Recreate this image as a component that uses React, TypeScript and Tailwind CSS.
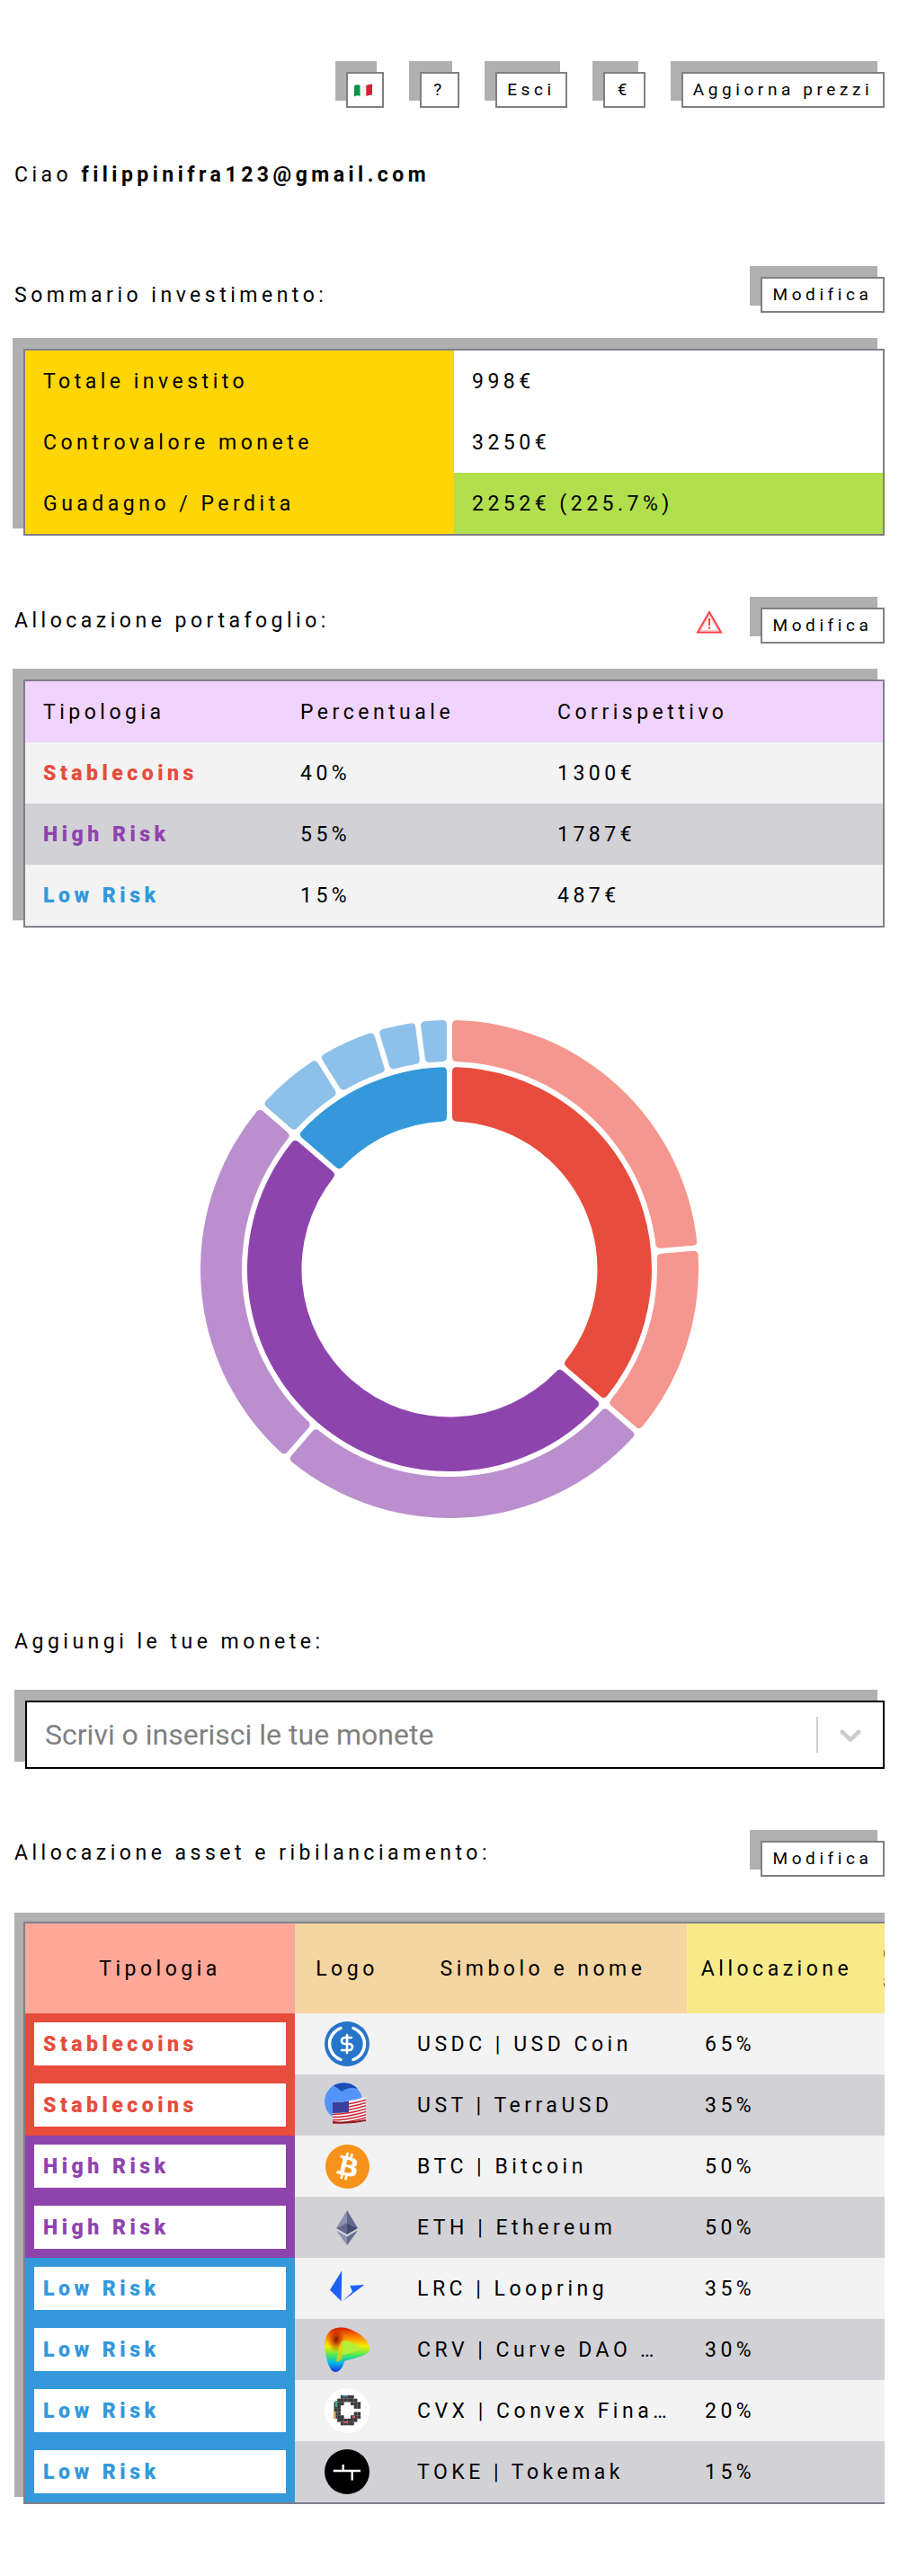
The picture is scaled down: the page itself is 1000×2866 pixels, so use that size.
import React from 'react';
import { DollarSign } from 'lucide-react';
import { SiBitcoin } from 'react-icons/si';

const CX = 500;
const CY = 300;

const pt = (r: number, deg: number) => {
  const a = (deg * Math.PI) / 180;
  return `${(CX + r * Math.sin(a)).toFixed(2)} ${(CY - r * Math.cos(a)).toFixed(2)}`;
};

const off = (r: number, g: number) => (Math.asin(g / r) * 180) / Math.PI;

// ring sector with a constant-width gap and small rounded corners
const sector = (r: number, R: number, a0: number, a1: number) => {
  const g = 3;
  const c = 5;
  const arcO = (c / R) * (180 / Math.PI);
  const arcI = (c / r) * (180 / Math.PI);
  const s0 = a0 + off(R, g);
  const e0 = a1 - off(R, g);
  const s1 = a0 + off(r, g);
  const e1 = a1 - off(r, g);
  const large = e0 - s0 > 180 ? 1 : 0;
  return [
    `M${pt(R, s0 + arcO)}`,
    `A${R} ${R} 0 ${large} 1 ${pt(R, e0 - arcO)}`,
    `Q${pt(R, e0)} ${pt(R - c, a1 - off(R - c, g))}`,
    `L${pt(r + c, a1 - off(r + c, g))}`,
    `Q${pt(r, e1)} ${pt(r, e1 - arcI)}`,
    `A${r} ${r} 0 ${large} 0 ${pt(r, s1 + arcI)}`,
    `Q${pt(r, s1)} ${pt(r + c, a0 + off(r + c, g))}`,
    `L${pt(R - c, a0 + off(R - c, g))}`,
    `Q${pt(R, s0)} ${pt(R, s0 + arcO)}Z`,
  ].join(' ');
};

const inner = [
  { from: 0, to: 130.91, color: '#e74c3c' },
  { from: 130.91, to: 310.91, color: '#8e44ad' },
  { from: 310.91, to: 360, color: '#3498db' },
];

const outer = [
  { from: 0, to: 85.09, color: '#f5978e' },
  { from: 85.09, to: 130.91, color: '#f5978e' },
  { from: 130.91, to: 220.91, color: '#bb8fce' },
  { from: 220.91, to: 310.91, color: '#bb8fce' },
  { from: 310.91, to: 328.09, color: '#8ec1ea' },
  { from: 328.09, to: 342.82, color: '#8ec1ea' },
  { from: 342.82, to: 352.64, color: '#8ec1ea' },
  { from: 352.64, to: 360, color: '#8ec1ea' },
];

const Donut: React.FC = () => (
  <svg width="968" height="600" viewBox="16 0 968 600" className="block">
    {inner.map((s) => (
      <path key={s.from} d={sector(164.5, 225, s.from, s.to)} fill={s.color} />
    ))}
    {outer.map((s) => (
      <path key={s.from} d={sector(231, 277, s.from, s.to)} fill={s.color} />
    ))}
  </svg>
);

const Btn: React.FC<{ w: string; children: React.ReactNode }> = ({ w, children }) => (
  <button className={`${w} h-10 flex items-center justify-center bg-white border-2 border-[#808080] shadow-[-10px_-10px_0_2px_#b0b0b0] text-[19px] tracking-[4.6px] text-black shrink-0`}>
    {children}
  </button>
);

const FlagIt = () => (
  <svg width="20" height="15" viewBox="0 0 20 15" className="-ml-1">
    <path d="M0 2.5 Q3.5 0.5 6.7 2 V14 Q3.5 12.5 0 14.5Z" fill="#0d9246" />
    <path d="M6.7 2 Q10 3.2 13.3 2 V14 Q10 15 6.7 14Z" fill="#f4f4f4" />
    <path d="M13.3 2 Q16.5 0.8 20 0.5 V12.5 Q16.5 12.8 13.3 14Z" fill="#d81f36" />
  </svg>
);

const WarnIcon = () => (
  <svg width="30" height="26" viewBox="0 0 30 26" className="mr-[42px] mb-2">
    <path d="M15 2 L28 24.5 H2 Z" fill="none" stroke="#ff3f46" strokeWidth="2" />
    <path d="M15 5.5 L25 22.8 H5 Z" fill="none" stroke="#ffb3b5" strokeWidth="1" />
    <rect x="14" y="9" width="2" height="8" fill="#ff3f46" />
    <rect x="14" y="18.5" width="2" height="2.2" fill="#ff3f46" />
  </svg>
);

const SummaryRow: React.FC<{ label: string; value: string; green?: boolean }> = ({ label, value, green }) => (
  <div className="flex h-[68px]">
    <div className="w-1/2 bg-[#ffd505] flex items-center px-5 pt-[2px]">{label}</div>
    <div className={`w-1/2 flex items-center px-5 pt-[2px] ${green ? 'bg-[#b1df4d]' : 'bg-white'}`}>{value}</div>
  </div>
);

const AllocRow: React.FC<{ a: React.ReactNode; b: string; c: string; bg: string }> = ({ a, b, c, bg }) => (
  <div className={`grid grid-cols-[286px_286px_1fr] h-[68px] items-center pl-5 pt-[2px] ${bg}`}>
    <div>{a}</div>
    <div>{b}</div>
    <div>{c}</div>
  </div>
);

const UsdcLogo = () => (
  <div className="relative w-[50px] h-[50px]">
    <svg width="50" height="50" viewBox="0 0 50 50" className="absolute inset-0">
      <circle cx="25" cy="25" r="25" fill="#2775ca" />
      <path d="M18 7.5 A18.5 18.5 0 0 0 18 42.5" fill="none" stroke="#fff" strokeWidth="3.4" strokeLinecap="round" />
      <path d="M32 7.5 A18.5 18.5 0 0 1 32 42.5" fill="none" stroke="#fff" strokeWidth="3.4" strokeLinecap="round" />
    </svg>
    <DollarSign className="absolute left-[13px] top-[13px] text-white" size={24} strokeWidth={2.6} />
  </div>
);

const UstLogo = () => (
  <svg width="50" height="50" viewBox="0 0 50 50">
    <circle cx="21" cy="21" r="21" fill="#5493f7" />
    <path d="M10 3.5 C18 -1 30 -1 37 7 C30 5 24 6 19 10 C16 7 13 5 10 3.5Z" fill="#0e3ca5" opacity="0.8" />
    <path d="M9 22 Q24 22 46 16 V43 Q26 47 9 45Z" fill="#f4f4f4" />
    {[0, 1, 2, 3, 4, 5, 6].map((i) => (
      <path key={i} d={`M9 ${24.5 + i * 3.3} Q26 ${24.5 + i * 3.3} 46 ${18.5 + i * 3.3} V${20 + i * 3.3} Q26 ${26 + i * 3.3} 9 ${26 + i * 3.3}Z`} fill="#d02236" />
    ))}
    <path d="M9 22 Q18 22 27 20.4 V33 Q18 34 9 34Z" fill="#3b3f9c" />
    <path d="M9 45 Q26 47 46 43 L46 41 Q26 45 9 43Z" fill="#8e1a22" />
  </svg>
);

const BtcLogo = () => (
  <div className="relative w-[50px] h-[50px] flex items-center justify-center">
    <div className="absolute w-[40px] h-[40px] rounded-full bg-white" />
    <SiBitcoin size={49} color="#f7931a" className="relative" />
  </div>
);

const EthLogo = () => (
  <svg width="24" height="39" viewBox="0 0 24 39">
    <polygon points="12,0 0,20 12,14" fill="#8a92b2" />
    <polygon points="12,0 24,20 12,14" fill="#62688f" />
    <polygon points="0,20 12,27 12,14" fill="#62688f" />
    <polygon points="24,20 12,27 12,14" fill="#454a75" />
    <polygon points="0,22.5 12,39 12,29.5" fill="#8a92b2" />
    <polygon points="24,22.5 12,39 12,29.5" fill="#62688f" />
  </svg>
);

const LrcLogo = () => (
  <svg width="50" height="50" viewBox="0 0 50 50">
    <polygon points="19.3,5.3 18.6,39.3 6,26.7" fill="#1c60ff" />
    <polygon points="44.3,21 28.3,22 31,28.7 20,39.3" fill="#1c60ff" />
  </svg>
);

const CrvLogo = () => (
  <svg width="50" height="50" viewBox="0 0 50 50">
    <defs>
      <linearGradient id="crv" x1="0" y1="0" x2="0" y2="1">
        <stop offset="0" stopColor="#d81e00" />
        <stop offset="0.22" stopColor="#ff8a00" />
        <stop offset="0.42" stopColor="#f6ee00" />
        <stop offset="0.62" stopColor="#4de85a" />
        <stop offset="0.8" stopColor="#00b6e8" />
        <stop offset="1" stopColor="#1a2fe0" />
      </linearGradient>
      <radialGradient id="crvdark" cx="0.5" cy="0.5" r="0.5">
        <stop offset="0" stopColor="#8c0c00" />
        <stop offset="1" stopColor="#c92000" stopOpacity="0" />
      </radialGradient>
    </defs>
    <path d="M4 7 C8 1 17 -1 27 2 C38 6 50 14 50 24 C50 31 40 33 22 38 C21 44 17 50 12 50 C6 50 2 38 0 22 C0 15 2 10 4 7Z" fill="url(#crv)" />
    <ellipse cx="13" cy="14" rx="10" ry="14" fill="url(#crvdark)" />
    <path d="M19 16 C26 14 36 19 41 24 C34 28 26 30 20 31Z" fill="#b4ef3a" />
    <path d="M19 16 C19 22 19 28 20 34 C18 38 15 40 13 38 C15 30 15 22 19 16Z" fill="#ffd000" opacity="0.65" />
  </svg>
);

const cvxRows = ['..####..', '.######.', '###..###', '##....##', '##......', '##....##', '###..###', '.######.', '..####..'];

const CvxLogo = () => (
  <svg width="50" height="50" viewBox="0 0 50 50">
    <circle cx="25" cy="25" r="25" fill="#fff" />
    {cvxRows.map((row, y) =>
      row.split('').map((ch, x) =>
        ch === '#' ? <rect key={`${x}-${y}`} x={10.5 + x * 3.7} y={8 + y * 3.7} width="3.75" height="3.75" fill="#3a3a3c" /> : null
      )
    )}
    <rect x="12" y="14" width="2" height="7" fill="#3fae8c" />
    <rect x="10.5" y="26" width="2" height="8" fill="#e8b93a" />
    <rect x="20" y="8" width="5" height="2" fill="#3a79c4" />
    <rect x="21" y="37" width="5" height="2" fill="#e0566a" />
    <rect x="31" y="31" width="3" height="2" fill="#e0566a" />
  </svg>
);

const TokeLogo = () => (
  <svg width="50" height="50" viewBox="0 0 50 50">
    <circle cx="25" cy="25" r="25" fill="#000" />
    <path d="M9.7 24 H40 M20.7 17 V24 M30.7 24 V34.5" stroke="#fff" strokeWidth="2.4" fill="none" />
  </svg>
);

const assets = [
  { type: 'Stablecoins', tone: 'red', logo: <UsdcLogo />, name: 'USDC | USD Coin', pct: '65%' },
  { type: 'Stablecoins', tone: 'red', logo: <UstLogo />, name: 'UST | TerraUSD', pct: '35%' },
  { type: 'High Risk', tone: 'purple', logo: <BtcLogo />, name: 'BTC | Bitcoin', pct: '50%' },
  { type: 'High Risk', tone: 'purple', logo: <EthLogo />, name: 'ETH | Ethereum', pct: '50%' },
  { type: 'Low Risk', tone: 'blue', logo: <LrcLogo />, name: 'LRC | Loopring', pct: '35%' },
  { type: 'Low Risk', tone: 'blue', logo: <CrvLogo />, name: 'CRV | Curve DAO Token', pct: '30%' },
  { type: 'Low Risk', tone: 'blue', logo: <CvxLogo />, name: 'CVX | Convex Finance', pct: '20%' },
  { type: 'Low Risk', tone: 'blue', logo: <TokeLogo />, name: 'TOKE | Tokemak', pct: '15%' },
];

const toneBg: Record<string, string> = { red: 'bg-[#e74c3c]', purple: 'bg-[#8e44ad]', blue: 'bg-[#3498db]' };
const toneText: Record<string, string> = { red: 'text-[#e74c3c]', purple: 'text-[#8e44ad]', blue: 'text-[#3498db]' };

const App: React.FC = () => {
  return (
    <div className="w-[1000px] px-4 pt-20 pb-20 bg-white text-black font-[family-name:Roboto,sans-serif] text-[23px] tracking-[4.5px] leading-6">
      <div className="flex justify-end gap-[40px]">
        <Btn w="w-[42px]"><FlagIt /></Btn>
        <Btn w="w-[44px]">?</Btn>
        <Btn w="w-[80px]">Esci</Btn>
        <Btn w="w-[47px]">€</Btn>
        <Btn w="w-[226px]">Aggiorna prezzi</Btn>
      </div>

      <p className="mt-[63px]">Ciao <span className="font-bold">filippinifra123@gmail.com</span></p>

      <div className="mt-[101px] flex items-center justify-between h-10">
        <span className="pt-[2px]">Sommario investimento:</span>
        <Btn w="w-[138px]">Modifica</Btn>
      </div>
      <div className="mt-10 ml-[10px] border-2 border-[#80808c] shadow-[-10px_-10px_0_2px_#b0b0b0]">
        <SummaryRow label="Totale investito" value="998€" />
        <SummaryRow label="Controvalore monete" value="3250€" />
        <SummaryRow label="Guadagno / Perdita" value="2252€ (225.7%)" green />
      </div>

      <div className="mt-20 flex items-center h-10">
        <span className="mb-[10px] mr-auto">Allocazione portafoglio:</span>
        <WarnIcon />
        <Btn w="w-[138px]">Modifica</Btn>
      </div>
      <div className="mt-10 ml-[10px] border-2 border-[#80808c] shadow-[-10px_-10px_0_2px_#b0b0b0]">
        <AllocRow a="Tipologia" b="Percentuale" c="Corrispettivo" bg="bg-[#f1d4fd]" />
        <AllocRow a={<b className="font-black text-[#e74c3c]">Stablecoins</b>} b="40%" c="1300€" bg="bg-[#f3f3f3]" />
        <AllocRow a={<b className="font-black text-[#8e44ad]">High Risk</b>} b="55%" c="1787€" bg="bg-[#d2d1d6]" />
        <AllocRow a={<b className="font-black text-[#3498db]">Low Risk</b>} b="15%" c="487€" bg="bg-[#f3f3f3]" />
      </div>

      <div className="mt-20">
        <Donut />
      </div>

      <p className="mt-[103px]">Aggiungi le tue monete:</p>
      <div className="mt-[53px] ml-3 h-[76px] border-2 border-black bg-white shadow-[-10px_-10px_0_2px_#b0b0b0] flex items-center pl-5 tracking-normal">
        <span className="text-[32px] text-[#808080] mr-auto">Scrivi o inserisci le tue monete</span>
        <span className="w-0.5 h-10 bg-[#cccccc] ml-auto" />
        <svg width="40" height="40" viewBox="0 0 20 20" className="ml-[16px] mr-4" fill="#cccccc">
          <path d="M4.516 7.548c0.436-0.446 1.043-0.481 1.576 0l3.908 3.747 3.908-3.747c0.533-0.481 1.141-0.446 1.574 0 0.436 0.445 0.408 1.197 0 1.615-0.406 0.418-4.695 4.502-4.695 4.502-0.217 0.223-0.502 0.335-0.787 0.335s-0.57-0.112-0.789-0.335c0 0-4.287-4.084-4.695-4.502s-0.436-1.17 0-1.615z" />
        </svg>
      </div>

      <div className="mt-20 flex items-center h-10">
        <span className="mb-3">Allocazione asset e ribilanciamento:</span>
        <span className="ml-auto"><Btn w="w-[138px]">Modifica</Btn></span>
      </div>
      <div className="mt-10 pt-[10px] pl-[10px] overflow-hidden">
        <div className="w-[1200px] border-2 border-[#80808c] shadow-[-10px_-10px_0_2px_#b0b0b0]">
          <div className="flex h-[100px] items-center text-center">
            <div className="w-[300px] h-full flex items-center justify-center pt-[2px] bg-[#ffa89a]">Tipologia</div>
            <div className="w-[116px] h-full flex items-center justify-center pt-[2px] bg-[#f5d5a0]">Logo</div>
            <div className="w-[320px] h-full flex items-center justify-center pt-[2px] bg-[#f5d5a0]">Simbolo e nome</div>
            <div className="w-[200px] h-full flex items-center justify-center pt-[2px] bg-[#f8ea8a]">Allocazione</div>
            <div className="flex-1 h-full flex items-center pl-[18px] text-left bg-[#f8ea8a] leading-[30px]">Corrispettivo<br />attuale</div>
          </div>
          {assets.map((a, i) => (
            <div key={a.name} className={`flex h-[68px] items-center ${i % 2 === 0 ? 'bg-[#f3f3f3]' : 'bg-[#d2d1d6]'}`}>
              <div className={`w-[300px] h-full p-[10px] ${toneBg[a.tone]}`}>
                <div className={`h-12 bg-white flex items-center px-[10px] pt-[2px] font-black ${toneText[a.tone]}`}>{a.type}</div>
              </div>
              <div className="w-[116px] flex justify-center">{a.logo}</div>
              <div className="w-[320px] pl-5 pr-5 pt-[2px] truncate">{a.name}</div>
              <div className="w-[200px] pl-5 pt-[2px]">{a.pct}</div>
            </div>
          ))}
        </div>
      </div>
    </div>
  );
};

export default App;
